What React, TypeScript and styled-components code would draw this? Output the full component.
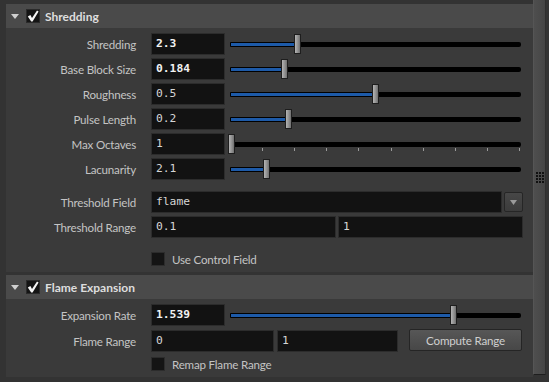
import styled, { createGlobalStyle } from "styled-components";

const GlobalStyle = createGlobalStyle`
    html, body {
        margin: 0;
        padding: 0;
        background: #333333;
    }
`;

const Window = styled.div`
    width: 549px;
    height: 382px;
    display: flex;
    overflow: hidden;
    background: #333333;
    font-family: Lato, "Open Sans", sans-serif;
`;

const Panel = styled.div`
    flex: 1;
    display: flex;
    flex-direction: column;
    gap: 3px;
    padding: 4px 0 0 6px;
    min-width: 0;
`;

const Section = styled.div`
    display: flex;
    flex-direction: column;
    background: #3a3a3a;
`;

const Header = styled.div`
    height: 24px;
    flex: none;
    display: flex;
    align-items: center;
    padding-left: 5px;
    background: #4a4a4a;
    color: #dedede;
    font-weight: 700;
    font-size: 12px;
`;

const HeaderBox = styled.div`
    width: 14px;
    height: 14px;
    box-sizing: border-box;
    margin: 0 5px 0 7px;
    background: #141414;
    border: 1px solid #2a2a2a;
    display: flex;
    align-items: center;
    justify-content: center;
`;

const Body = styled.div`
    display: flex;
    flex-direction: column;
    padding: 5px 10px 2px 0;
`;

const Spacer = styled.div<{ $h: number }>`
    height: ${(p) => p.$h}px;
    flex: none;
`;

const Row = styled.div`
    display: grid;
    grid-template-columns: 130px 1fr;
    column-gap: 15px;
    height: 22px;
    align-items: center;
`;

const Label = styled.div`
    text-align: right;
    color: #c4c4c4;
    font-size: 11.6px;
    letter-spacing: -0.2px;
    white-space: nowrap;
`;

const Controls = styled.div`
    display: flex;
    align-items: center;
    height: 22px;
    min-width: 0;
`;

const Field = styled.div<{ $w?: number; $bold?: boolean }>`
    box-sizing: border-box;
    height: 22px;
    ${(p) => (p.$w ? `width: ${p.$w}px; flex: none;` : "flex: 1;")}
    min-width: 0;
    background: #121212;
    border: 1px solid #2c2c2c;
    padding-left: 4px;
    font-family: "DejaVu Sans Mono", "Liberation Mono", monospace;
    font-size: 11.3px;
    line-height: 20px;
    font-weight: ${(p) => (p.$bold ? 700 : 400)};
    color: ${(p) => (p.$bold ? "#f2f2f2" : "#d6d6d6")};
    white-space: nowrap;
`;

const SliderBox = styled.div`
    position: relative;
    flex: 1;
    height: 22px;
    margin: 0 2px 0 5px;
`;

const Track = styled.div`
    position: absolute;
    left: 0;
    right: 0;
    top: 9px;
    height: 5px;
    background: #000;
    border-radius: 1px 2px 2px 1px;
`;

const Fill = styled.div`
    position: absolute;
    left: 1px;
    top: 1px;
    height: 3px;
    background: #1d5aa8;
`;

const Handle = styled.div`
    position: absolute;
    top: 1px;
    width: 7px;
    height: 20px;
    box-sizing: border-box;
    border: 1px solid #1e1e1e;
    background: linear-gradient(to right, #b4b4b4, #8e8e8e 60%, #707070);
`;

const Tick = styled.div`
    position: absolute;
    top: 15px;
    width: 1px;
    height: 3px;
    background: #9a9a9a;
`;

const DropButton = styled.div`
    flex: none;
    width: 19px;
    height: 20px;
    margin-left: 2px;
    box-sizing: border-box;
    border: 1px solid #262626;
    border-radius: 2px;
    background: linear-gradient(#474747, #3c3c3c);
    display: flex;
    align-items: center;
    justify-content: center;
`;

const Button = styled.div`
    flex: none;
    width: 113px;
    height: 22px;
    margin: -2px 0 0 8px;
    box-sizing: border-box;
    border: 1px solid #252525;
    border-radius: 2px;
    background: linear-gradient(#575757, #474747);
    color: #cfcfcf;
    font-size: 11.6px;
    letter-spacing: -0.2px;
    display: flex;
    align-items: center;
    justify-content: center;
`;

const Check = styled.div`
    display: flex;
    align-items: center;
    gap: 7px;
    color: #c4c4c4;
    font-size: 11.6px;
    letter-spacing: -0.2px;
`;

const Box = styled.div`
    width: 14px;
    height: 14px;
    box-sizing: border-box;
    background: #141414;
    border: 1px solid #2c2c2c;
`;

const Scrollbar = styled.div`
    width: 16px;
    flex: none;
    display: flex;
    flex-direction: column;
    background: #333333;
`;

const Thumb = styled.div`
    width: 13px;
    height: 375px;
    box-sizing: border-box;
    border-left: 1px solid #555;
    border-right: 1px solid #2e2e2e;
    border-bottom: 1px solid #1e1e1e;
    background: linear-gradient(to right, #4e4e4e, #4a4a4a 50%, #444);
    display: flex;
    align-items: center;
    justify-content: center;
    padding-bottom: 20px;
`;

const Grip = styled.div`
    display: grid;
    grid-template-columns: repeat(3, 2px);
    grid-auto-rows: 2px;
    gap: 1px;
    span {
        background: #111;
    }
`;

const Arrow = () => (
    <svg width="8" height="5" viewBox="0 0 8 5">
        <path d="M0 0 H8 L4 5 Z" fill="#cfcfcf" />
    </svg>
);

const Tick2 = () => (
    <svg width="12" height="12" viewBox="0 0 12 12">
        <path d="M0.8 6.4 L3.4 5 L5 8 L10 0.4 L11.6 1.6 L5.6 11.6 L4.2 11.6 Z" fill="#f4f4f4" />
    </svg>
);

const SectionHeader = ({ title }: { title: string }) => (
    <Header>
        <Arrow />
        <HeaderBox>
            <Tick2 />
        </HeaderBox>
        {title}
    </Header>
);

interface SliderProps {
    value: number;
    min: number;
    max: number;
    ticks?: number;
}

const Slider = ({ value, min, max, ticks }: SliderProps) => {
    const frac = (value - min) / (max - min);
    return (
        <SliderBox>
            <Track>
                <Fill style={{ width: `calc(${frac} * (100% - 2px))` }} />
            </Track>
            {ticks &&
                Array.from({ length: ticks }, (_, i) => (
                    <Tick key={i} style={{ left: `calc(${(i + 1) / ticks} * (100% - 2px))` }} />
                ))}
            <Handle style={{ left: `calc(${frac} * (100% - 2px) - 2.5px)` }} />
        </SliderBox>
    );
};

interface ParmProps {
    label: string;
    value: string;
    num: number;
    min: number;
    max: number;
    bold?: boolean;
    ticks?: number;
}

const SliderParm = ({ label, value, num, min, max, bold, ticks }: ParmProps) => (
    <Row>
        <Label>{label}</Label>
        <Controls>
            <Field $w={74} $bold={bold}>{value}</Field>
            <Slider value={num} min={min} max={max} ticks={ticks} />
        </Controls>
    </Row>
);

const App = () => {
    return (
        <>
            <GlobalStyle />
            <Window>
                <Panel>
                    <Section>
                        <SectionHeader title="Shredding" />
                        <Body>
                            <SliderParm label="Shredding" value="2.3" num={2.3} min={0} max={10} bold />
                            <Spacer $h={3} />
                            <SliderParm label="Base Block Size" value="0.184" num={0.184} min={0} max={1} bold />
                            <Spacer $h={3} />
                            <SliderParm label="Roughness" value="0.5" num={0.5} min={0} max={1} />
                            <Spacer $h={3} />
                            <SliderParm label="Pulse Length" value="0.2" num={0.2} min={0} max={1} />
                            <Spacer $h={3} />
                            <SliderParm label="Max Octaves" value="1" num={1} min={1} max={10} ticks={9} />
                            <Spacer $h={3} />
                            <SliderParm label="Lacunarity" value="2.1" num={2.1} min={1} max={10} />
                            <Spacer $h={11} />
                            <Row>
                                <Label>Threshold Field</Label>
                                <Controls>
                                    <Field>flame</Field>
                                    <DropButton>
                                        <svg width="7" height="5" viewBox="0 0 7 5">
                                            <path d="M0 0 H7 L3.5 5 Z" fill="#9a9a9a" />
                                        </svg>
                                    </DropButton>
                                </Controls>
                            </Row>
                            <Spacer $h={3} />
                            <Row>
                                <Label>Threshold Range</Label>
                                <Controls style={{ gap: 2 }}>
                                    <Field>0.1</Field>
                                    <Field>1</Field>
                                </Controls>
                            </Row>
                            <Spacer $h={10} />
                            <Row>
                                <span />
                                <Check>
                                    <Box />
                                    Use Control Field
                                </Check>
                            </Row>
                        </Body>
                    </Section>
                    <Section>
                        <SectionHeader title="Flame Expansion" />
                        <Body>
                            <SliderParm label="Expansion Rate" value="1.539" num={1.539} min={0} max={2} bold />
                            <Spacer $h={4} />
                            <Row>
                                <Label>Flame Range</Label>
                                <Controls style={{ gap: 3 }}>
                                    <Field $w={123}>0</Field>
                                    <Field $w={121}>1</Field>
                                    <Button>Compute Range</Button>
                                </Controls>
                            </Row>
                            <Spacer $h={1} />
                            <Row>
                                <span />
                                <Check>
                                    <Box />
                                    Remap Flame Range
                                </Check>
                            </Row>
                        </Body>
                    </Section>
                </Panel>
                <Scrollbar>
                    <Thumb>
                        <Grip>
                            {Array.from({ length: 12 }, (_, i) => (
                                <span key={i} />
                            ))}
                        </Grip>
                    </Thumb>
                </Scrollbar>
            </Window>
        </>
    );
};

export default App;
